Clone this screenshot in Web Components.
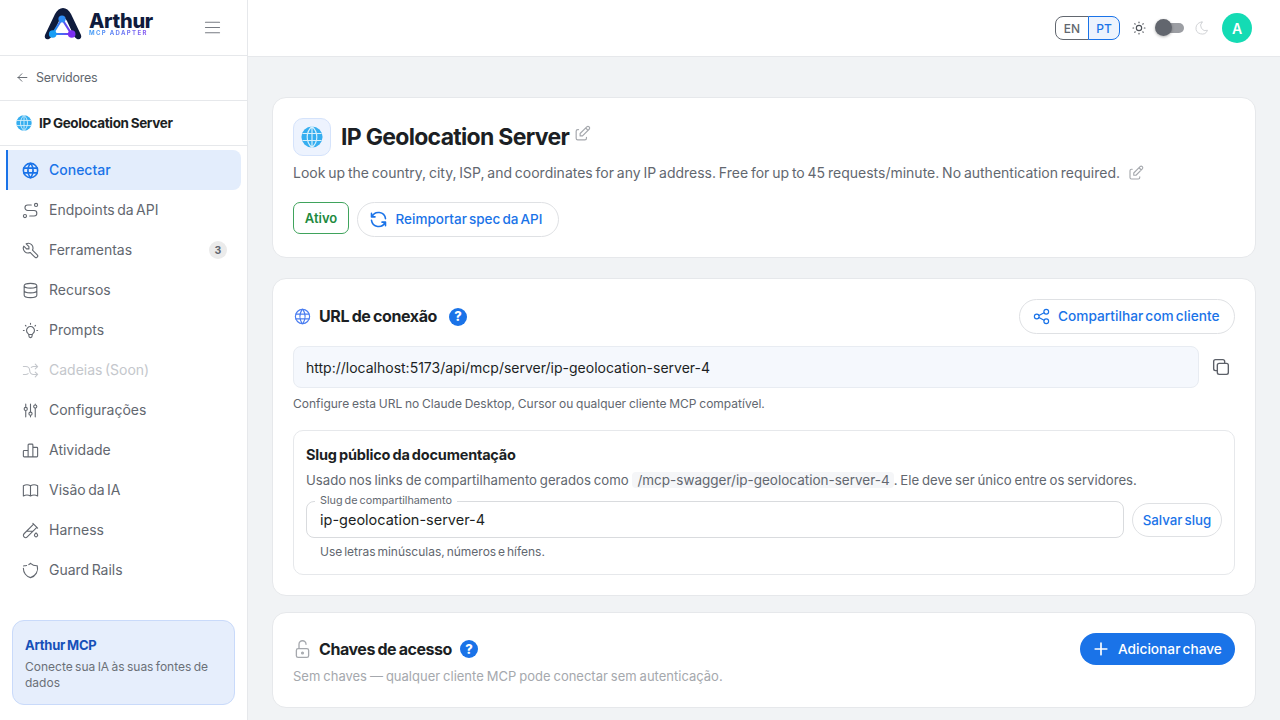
<!doctype html>
<html lang="pt">
<head>
<meta charset="utf-8">
<title>IP Geolocation Server</title>
<style>
  html, body { height: 100%; margin: 0; overflow: hidden; }
  body { color: #1c1f24; font-family: Inter, "Liberation Sans", sans-serif; }
</style>
</head>
<body>
<app-shell>
  <side-bar slot="side">
    <nav-item icon="world" active>Conectar</nav-item>
    <nav-item icon="route">Endpoints da API</nav-item>
    <nav-item icon="tool" badge="3">Ferramentas</nav-item>
    <nav-item icon="database">Recursos</nav-item>
    <nav-item icon="bulb">Prompts</nav-item>
    <nav-item icon="shuffle" disabled>Cadeias (Soon)</nav-item>
    <nav-item icon="sliders">Configurações</nav-item>
    <nav-item icon="chart">Atividade</nav-item>
    <nav-item icon="book">Visão da IA</nav-item>
    <nav-item icon="pipe">Harness</nav-item>
    <nav-item icon="shield">Guard Rails</nav-item>
  </side-bar>
  <top-bar slot="top"></top-bar>
  <server-head></server-head>
  <connect-card></connect-card>
  <keys-card></keys-card>
</app-shell>

<script>
/* global HTMLElement */
const icons = {
  world: '<circle cx="12" cy="12" r="9"/><path d="M3.6 9h16.8M3.6 15h16.8M11.5 3a17 17 0 0 0 0 18M12.5 3a17 17 0 0 1 0 18"/>',
  route: '<path d="M3 19a2 2 0 1 0 4 0a2 2 0 0 0 -4 0M19 7a2 2 0 1 0 0 -4a2 2 0 0 0 0 4zM11 19h5.5a3.5 3.5 0 0 0 0 -7h-8a3.5 3.5 0 0 1 0 -7h4.5"/>',
  tool: '<path d="M7 10h3v-3l-3.5 -3.5a6 6 0 0 1 8 8l6 6a2 2 0 0 1 -3 3l-6 -6a6 6 0 0 1 -8 -8l3.5 3.5"/>',
  database: '<path d="M4 6a8 3 0 1 0 16 0a8 3 0 1 0 -16 0M4 6v6a8 3 0 0 0 16 0v-6M4 12v6a8 3 0 0 0 16 0v-6"/>',
  bulb: '<path d="M3 12h1m8 -9v1m8 8h1m-15.4 -6.4l.7 .7m12.1 -.7l-.7 .7M9 16a5 5 0 1 1 6 0a3.5 3.5 0 0 0 -1 3a2 2 0 0 1 -4 0a3.5 3.5 0 0 0 -1 -3M9.7 17h4.6"/>',
  shuffle: '<path d="M18 4l3 3l-3 3M18 20l3 -3l-3 -3M3 7h3a5 5 0 0 1 5 5a5 5 0 0 0 5 5h5M21 7h-5a4.98 4.98 0 0 0 -3 1m-4 8a4.98 4.98 0 0 1 -3 1h-3"/>',
  sliders: '<path d="M4 10a2 2 0 1 0 4 0a2 2 0 0 0 -4 0M6 4v4M6 12v8M10 16a2 2 0 1 0 4 0a2 2 0 0 0 -4 0M12 4v10M12 18v2M16 7a2 2 0 1 0 4 0a2 2 0 0 0 -4 0M18 4v1M18 9v11"/>',
  chart: '<path d="M3 13a1 1 0 0 1 1 -1h4a1 1 0 0 1 1 1v6a1 1 0 0 1 -1 1h-4a1 1 0 0 1 -1 -1zM15 9a1 1 0 0 1 1 -1h4a1 1 0 0 1 1 1v10a1 1 0 0 1 -1 1h-4a1 1 0 0 1 -1 -1zM9 5a1 1 0 0 1 1 -1h4a1 1 0 0 1 1 1v14a1 1 0 0 1 -1 1h-4a1 1 0 0 1 -1 -1zM4 20h16"/>',
  book: '<path d="M3 19a9 9 0 0 1 9 0a9 9 0 0 1 9 0M3 6a9 9 0 0 1 9 0a9 9 0 0 1 9 0M3 6v13M12 6v13M21 6v13"/>',
  pipe: '<path d="M20 8.04l-12.122 12.124a2.857 2.857 0 1 1 -4.041 -4.04l12.122 -12.124M7 13h8M19 15l1.5 1.6a2 2 0 1 1 -3 0l1.5 -1.6zM15 3l6 6"/>',
  shield: '<path d="M12 3a12 12 0 0 0 8.5 3a12 12 0 0 1 -8.5 15a12 12 0 0 1 -8.5 -15a12 12 0 0 0 8.5 -3" stroke-dasharray="44 3 4 3"/>',
  menu: '<path d="M4 6h16M4 12h16M4 18h16"/>',
  back: '<path d="M5 12h14M5 12l6 6M5 12l6 -6"/>',
  sun: '<circle cx="12" cy="12" r="4"/><path d="M3 12h1m8 -9v1m8 8h1m-9 8v1m-6.4 -15.4l.7 .7m12.1 -.7l-.7 .7m0 11.4l.7 .7m-12.1 -.7l-.7 .7"/>',
  moon: '<path d="M12 3c.132 0 .263 0 .393 0a7.5 7.5 0 0 0 7.92 12.446a9 9 0 1 1 -8.313 -12.454z"/>',
  edit: '<path d="M7 7h-1a2 2 0 0 0 -2 2v9a2 2 0 0 0 2 2h9a2 2 0 0 0 2 -2v-1M20.385 6.585a2.1 2.1 0 0 0 -2.97 -2.97l-8.415 8.385v3h3l8.385 -8.415zM16 5l3 3"/>',
  refresh: '<path d="M20 11a8.1 8.1 0 0 0 -15.5 -2m-.5 -4v4h4M4 13a8.1 8.1 0 0 0 15.5 2m.5 4v-4h-4"/>',
  share: '<circle cx="6" cy="12" r="3"/><circle cx="18" cy="6" r="3"/><circle cx="18" cy="18" r="3"/><path d="M8.7 10.7l6.6 -3.4M8.7 13.3l6.6 3.4"/>',
  copy: '<path d="M8 10a2 2 0 0 1 2 -2h8a2 2 0 0 1 2 2v8a2 2 0 0 1 -2 2h-8a2 2 0 0 1 -2 -2zM16 8v-2a2 2 0 0 0 -2 -2h-8a2 2 0 0 0 -2 2v8a2 2 0 0 0 2 2h2"/>',
  lock: '<path d="M5 13a2 2 0 0 1 2 -2h10a2 2 0 0 1 2 2v6a2 2 0 0 1 -2 2h-10a2 2 0 0 1 -2 -2zM11 16a1 1 0 1 0 2 0a1 1 0 1 0 -2 0M8 11v-5a4 4 0 0 1 8 0"/>',
  plus: '<path d="M12 5v14M5 12h14"/>'
}

class XIcon extends HTMLElement {
  constructor () {
    super()
    const size = this.getAttribute('size') || 18
    const sw = this.getAttribute('sw') || 1.5
    this.attachShadow({mode: 'open'}).innerHTML = `
      <style>
        :host { display: inline-flex; flex: none; width: ${size}px; height: ${size}px; }
        svg { width: 100%; height: 100%; fill: none; stroke: currentColor; stroke-width: ${sw}; stroke-linecap: round; stroke-linejoin: round; }
      </style>
      <svg viewBox="0 0 24 24">${icons[this.getAttribute('name')] || ''}</svg>`
  }
}
customElements.define('x-icon', XIcon)

// the blue emoji style globe, used next to the server name
class GlobeMark extends HTMLElement {
  constructor () {
    super()
    const size = this.getAttribute('size') || 16
    this.attachShadow({mode: 'open'}).innerHTML = `
      <style>:host { display: inline-flex; flex: none; width: ${size}px; height: ${size}px; }</style>
      <svg viewBox="0 0 24 24" width="${size}" height="${size}">
        <circle cx="12" cy="12" r="11.5" fill="#35aef0"/>
        <path d="M1.5 8.2h21M1.5 15.8h21M12 .5v23M12 .5c-7 6-7 17 0 23M12 .5c7 6 7 17 0 23" fill="none" stroke="#d6f0fc" stroke-width="1.3"/>
      </svg>`
  }
}
customElements.define('globe-mark', GlobeMark)

class HelpDot extends HTMLElement {
  constructor () {
    super()
    this.attachShadow({mode: 'open'}).innerHTML = `
      <style>
        :host {
          align-items: center; background: #1a73e8; border-radius: 50%; color: #fff; display: inline-flex; flex: none;
          font: 800 13px/1 Inter, sans-serif; height: 18px; justify-content: center; width: 18px;
        }
      </style>?`
  }
}
customElements.define('help-dot', HelpDot)

class AppShell extends HTMLElement {
  constructor () {
    super()
    this.attachShadow({mode: 'open'}).innerHTML = `
      <style>
        :host { display: grid; grid-template-columns: 248px 1fr; height: 720px; overflow: hidden; }
        .main { background: #f1f3f5; display: flex; flex-direction: column; min-width: 0; }
        .content { display: flex; flex-direction: column; gap: 20px; padding: 40px 24px 0; }
        ::slotted(keys-card) { margin-top: -4px; }
      </style>
      <slot name="side"></slot>
      <div class="main">
        <slot name="top"></slot>
        <div class="content"><slot></slot></div>
      </div>`
  }
}
customElements.define('app-shell', AppShell)

class SideBar extends HTMLElement {
  constructor () {
    super()
    this.attachShadow({mode: 'open'}).innerHTML = `
      <style>
        :host {
          background: #fff; border-right: 1px solid #e6e8eb; box-sizing: border-box; display: flex; flex-direction: column;
          height: 720px;
        }
        .brand { align-items: center; border-bottom: 1px solid #e6e8eb; box-sizing: border-box; display: flex; flex: none; height: 56px; padding-left: 44px; }
        .logo { display: block; margin-bottom: 8px; }
        .word { display: flex; flex-direction: column; margin-bottom: 7px; margin-left: 7px; }
        .name { color: #0f1b3d; font: 800 20px/18px Inter, sans-serif; letter-spacing: -.3px; }
        .sub {
          background: linear-gradient(90deg, #3b9cf5, #8b4df0); -webkit-background-clip: text; background-clip: text; color: transparent;
          font: 700 6px/6px Inter, sans-serif; letter-spacing: 1.35px;
        }
        .burger { color: #777b82; margin-left: auto; margin-right: 24px; }
        .back { align-items: center; border-bottom: 1px solid #e6e8eb; box-sizing: border-box; color: #62676f; display: flex; flex: none; font-size: 12.5px; gap: 6px; height: 45px; letter-spacing: -.25px; padding-bottom: 1px; padding-left: 15px; }
        .server { align-items: center; border-bottom: 1px solid #e6e8eb; box-sizing: border-box; color: #1c1f24; display: flex; flex: none; font-size: 13.5px; font-weight: 700; gap: 7px; height: 45px; letter-spacing: -.35px; padding-left: 16px; word-spacing: -.8px; }
        nav { display: flex; flex-direction: column; padding: 4px 6px 0; }
        .promo { background: #e6eefc; border: 1px solid #c9dafa; border-radius: 12px; box-sizing: border-box; height: 85px; margin: auto 12px 15px; padding: 15px 12px; }
        .promo b { color: #1650b8; display: block; font-size: 13px; font-weight: 700; letter-spacing: -.25px; line-height: 18px; word-spacing: -.8px; }
        .promo span { color: #6b7078; display: block; font-size: 12px; line-height: 16px; margin-top: 5px; word-spacing: -1px; }
      </style>
      <div class="brand">
        <svg class="logo" width="38" height="32" viewBox="0 0 38 32">
          <defs><linearGradient id="tri" x1="0" x2="1" y1="0" y2="0"><stop offset="0" stop-color="#18a0f5"/><stop offset="1" stop-color="#7b2ff2"/></linearGradient></defs>
          <path d="M1 27L11 6C13 2 16 0 19 0C22 0 25 2 27 6L37 27C38 30 36 32 33 31C31 30 30 28 29 26L23 13C21 9 17 9 15 13L9 26C8 28 7 30 5 31C2 32 0 30 1 27Z" fill="#0f1b3d"/>
          <path d="M18 11l9.500 15H8.500z" fill="#fff" stroke="url(#tri)" stroke-width="2.2" stroke-linejoin="round"/>
          <circle cx="18" cy="11" r="3.6" fill="#2e8bf5"/>
          <circle cx="8.700" cy="26" r="3.800" fill="#189ef5"/>
          <circle cx="27.700" cy="26" r="3.800" fill="#7b2ff2"/>
        </svg>
        <div class="word"><span class="name">Arthur</span><span class="sub">MCP ADAPTER</span></div>
        <x-icon class="burger" name="menu" size="21" sw="1.4"></x-icon>
      </div>
      <div class="back"><x-icon name="back" size="15"></x-icon>Servidores</div>
      <div class="server"><globe-mark></globe-mark>IP Geolocation Server</div>
      <nav><slot></slot></nav>
      <div class="promo"><b>Arthur MCP</b><span>Conecte sua IA às suas fontes de dados</span></div>`
  }
}
customElements.define('side-bar', SideBar)

class NavItem extends HTMLElement {
  constructor () {
    super()
    const badge = this.getAttribute('badge')
    const sw = this.hasAttribute('active') ? 2 : 1.4
    this.attachShadow({mode: 'open'}).innerHTML = `
      <style>
        :host {
          align-items: center; border-left: 2px solid transparent; box-sizing: border-box; color: #62676f; display: flex;
          font-size: 14px; gap: 9.5px; height: 40px; padding: 0 14px 0 12.5px; word-spacing: -1.5px;
        }
        :host([active]) { background: #e3edfc; border-left-color: #1a73e8; border-radius: 0 8px 8px 0; color: #1a73e8; font-weight: 500; }
        :host([disabled]) { color: #c4c7cc; }
        .label { padding-bottom: 2px; }
        .badge { align-items: center; background: #ebebeb; border-radius: 50%; color: #62676f; display: flex; font-size: 10.5px; font-weight: 700; height: 18px; justify-content: center; margin-left: auto; width: 18px; }
      </style>
      <x-icon name="${this.getAttribute('icon')}" size="19" sw="${sw}"></x-icon>
      <span class="label"><slot></slot></span>
      ${badge ? `<span class="badge">${badge}</span>` : ''}`
  }
}
customElements.define('nav-item', NavItem)

class TopBar extends HTMLElement {
  constructor () {
    super()
    this.attachShadow({mode: 'open'}).innerHTML = `
      <style>
        :host { align-items: center; background: #fff; border-bottom: 1px solid #e6e8eb; box-sizing: border-box; display: flex; flex: none; height: 57px; justify-content: flex-end; padding-right: 28px; }
        .lang { display: flex; font-size: 12px; font-weight: 500; }
        .lang span { align-items: center; box-sizing: border-box; display: flex; height: 24px; justify-content: center; }
        .en { border: 1px solid #62676f; border-radius: 8px 0 0 8px; color: #62676f; width: 34px; }
        .pt { background: #edf3fd; border: 1px solid #1a73e8; border-radius: 0 8px 8px 0; color: #1a73e8; margin-left: -1px; width: 32px; }
        .sun { color: #4f535a; margin-left: 11px; }
        .switch { height: 18px; margin-left: 8px; position: relative; width: 29px; }
        .track { background: #9c9ea3; border-radius: 5px; height: 10px; left: 5px; position: absolute; top: 4px; width: 24px; }
        .thumb { background: #62666e; border-radius: 50%; box-shadow: 0 1px 3px rgba(0,0,0,.3); height: 17px; left: 0; position: absolute; top: 0; width: 17px; }
        .moon { color: #d2d4d7; margin-left: 10px; }
        .avatar { align-items: center; background: #14dbb4; border-radius: 50%; color: #fff; display: flex; font-size: 14px; font-weight: 600; height: 30px; justify-content: center; margin-left: 12px; width: 30px; }
      </style>
      <div class="lang"><span class="en">EN</span><span class="pt">PT</span></div>
      <x-icon class="sun" name="sun" size="16" sw="1.7"></x-icon>
      <div class="switch"><div class="track"></div><div class="thumb"></div></div>
      <x-icon class="moon" name="moon" size="16"></x-icon>
      <div class="avatar">A</div>`
  }
}
customElements.define('top-bar', TopBar)

const pill = `
  .pill { align-items: center; background: #fff; border: 1px solid #dfe1e4; border-radius: 18px; box-sizing: border-box; color: #1a73e8; display: inline-flex; font-size: 13.5px; font-weight: 500; white-space: nowrap; word-spacing: -1.5px; }
`
const cardHost = `
  :host { background: #fff; border: 1px solid #e6e8eb; border-radius: 14px; box-sizing: border-box; display: block; padding: 20px; }
`

class ServerHead extends HTMLElement {
  constructor () {
    super()
    this.attachShadow({mode: 'open'}).innerHTML = `
      <style>
        ${cardHost}${pill}
        :host { height: 161px; }
        .title { align-items: center; display: flex; }
        .mark { align-items: center; background: #edf3fe; border: 1px solid #d5e3fb; border-radius: 10px; box-sizing: border-box; display: flex; height: 38px; justify-content: center; width: 38px; }
        h1 { font-size: 23px; font-weight: 700; letter-spacing: -.7px; line-height: 38px; margin: 0 4px 0 10px; }
        .edit { color: #a5a8ad; }
        .title .edit { margin-bottom: 8px; }
        p { align-items: center; color: #62676f; display: flex; font-size: 14px; gap: 7px; line-height: 20px; margin: 7px 0 0; word-spacing: -1.1px; }
        .row { align-items: flex-start; display: flex; gap: 8px; margin-top: 19px; }
        .state { align-items: center; border: 1px solid #3fa35c; border-radius: 7px; box-sizing: border-box; color: #1e8a3e; display: flex; font-size: 13px; font-weight: 600; height: 32px; justify-content: center; width: 56px; }
        .pill { gap: 6.5px; height: 35px; padding: 0 0 1px 10px; width: 202px; }
      </style>
      <div class="title">
        <div class="mark"><globe-mark size="22"></globe-mark></div>
        <h1>IP Geolocation Server</h1>
        <x-icon class="edit" name="edit" size="19"></x-icon>
      </div>
      <p><span>Look up the country, city, ISP, and coordinates for any IP address. Free for up to 45 requests/minute. No authentication required.</span><x-icon class="edit" name="edit" size="18"></x-icon></p>
      <div class="row">
        <span class="state">Ativo</span>
        <span class="pill"><x-icon name="refresh" size="21" sw="1.8"></x-icon>Reimportar spec da API</span>
      </div>`
  }
}
customElements.define('server-head', ServerHead)

class ConnectCard extends HTMLElement {
  constructor () {
    super()
    this.attachShadow({mode: 'open'}).innerHTML = `
      <style>
        ${cardHost}${pill}
        :host { height: 318px; }
        .head { align-items: center; display: flex; height: 35px; }
        .head .globe { color: #4a7df0; margin-right: 7px; }
        h2 { font-size: 16px; font-weight: 700; letter-spacing: -.4px; margin: 0 12px 2px 0; word-spacing: -.8px; }
        .share { font-size: 13.7px; gap: 7px; height: 35px; margin-left: auto; padding: 0 0 1px 12px; width: 216px; }
        .url { align-items: center; display: flex; gap: 10px; margin-top: 12px; }
        .box { align-items: center; background: #f5f8fd; border: 1px solid #e8ecf2; border-radius: 8px; box-sizing: border-box; display: flex; flex: 1; font-size: 14px; height: 42px; padding-left: 12px; }
        .copy { color: #5c6068; margin: 0 3px 0 1px; }
        .note { color: #62676f; font-size: 12px; line-height: 16px; margin: 8px 0 0; word-spacing: -.6px; }
        .slug { border: 1px solid #e6e8eb; border-radius: 10px; box-sizing: border-box; height: 145px; margin-top: 18px; padding: 15px 12px 0; }
        h3 { font-size: 14.5px; font-weight: 700; letter-spacing: -.2px; line-height: 18px; margin: 0; word-spacing: -1px; }
        .desc { align-items: center; color: #62676f; display: flex; font-size: 13.2px; height: 20px; margin: 6px 0 0; white-space: pre; word-spacing: -.9px; }
        code { background: #f5f6f8; border-radius: 4px; font: inherit; font-size: 13.5px; margin-left: 1px; padding: 0 4px 0 5px; word-spacing: 0; }
        .field { align-items: center; display: flex; gap: 8px; margin-top: 11px; }
        .input { align-items: center; border: 1px solid #d9dbde; border-radius: 8px; box-sizing: border-box; display: flex; flex: 1; font-size: 14.5px; height: 37px; padding-left: 13px; position: relative; }
        .input label { background: #fff; color: #62676f; font-size: 10.8px; left: 8px; line-height: 12px; padding: 0 5px; position: absolute; top: -7px; word-spacing: -1px; }
        .save { font-size: 13.3px; height: 34px; justify-content: center; width: 90px; }
        .hint { color: #62676f; font-size: 12px; line-height: 16px; margin: 6px 0 0 14px; word-spacing: -1.5px; }
      </style>
      <div class="head">
        <x-icon class="globe" name="world" size="19"></x-icon>
        <h2>URL de conexão</h2>
        <help-dot></help-dot>
        <span class="pill share"><x-icon name="share" size="19"></x-icon>Compartilhar com cliente</span>
      </div>
      <div class="url">
        <div class="box">http://localhost:5173/api/mcp/server/ip-geolocation-server-4</div>
        <x-icon class="copy" name="copy" size="22"></x-icon>
      </div>
      <p class="note">Configure esta URL no Claude Desktop, Cursor ou qualquer cliente MCP compatível.</p>
      <div class="slug">
        <h3>Slug público da documentação</h3>
        <p class="desc">Usado nos links de compartilhamento gerados como <code>/mcp-swagger/ip-geolocation-server-4</code>. Ele deve ser único entre os servidores.</p>
        <div class="field">
          <div class="input"><label>Slug de compartilhamento</label>ip-geolocation-server-4</div>
          <span class="pill save">Salvar slug</span>
        </div>
        <p class="hint">Use letras minúsculas, números e hífens.</p>
      </div>`
  }
}
customElements.define('connect-card', ConnectCard)

class KeysCard extends HTMLElement {
  constructor () {
    super()
    this.attachShadow({mode: 'open'}).innerHTML = `
      <style>
        ${cardHost}
        :host { height: 96px; }
        .head { align-items: center; display: flex; height: 32px; }
        .lock { color: #a5a8ad; margin-left: -1.5px; margin-right: 6.5px; }
        h2 { font-size: 16px; font-weight: 700; letter-spacing: -.45px; margin: 0 8px 0 0; word-spacing: -.8px; }
        .add { align-items: center; background: #1a73e8; border-radius: 16px; box-sizing: border-box; color: #fff; display: flex; font-size: 13.7px; font-weight: 500; gap: 7px; height: 32px; margin-left: auto; padding-left: 11px; white-space: nowrap; width: 155px; word-spacing: -1.5px; }
        p { color: #a5a8ad; font-size: 13px; line-height: 18px; margin: 2px 0 0; word-spacing: -.7px; }
      </style>
      <div class="head">
        <x-icon class="lock" name="lock" size="21"></x-icon>
        <h2>Chaves de acesso</h2>
        <help-dot></help-dot>
        <span class="add"><x-icon name="plus" size="20" sw="2"></x-icon>Adicionar chave</span>
      </div>
      <p>Sem chaves — qualquer cliente MCP pode conectar sem autenticação.</p>`
  }
}
customElements.define('keys-card', KeysCard)
</script>
</body>
</html>
